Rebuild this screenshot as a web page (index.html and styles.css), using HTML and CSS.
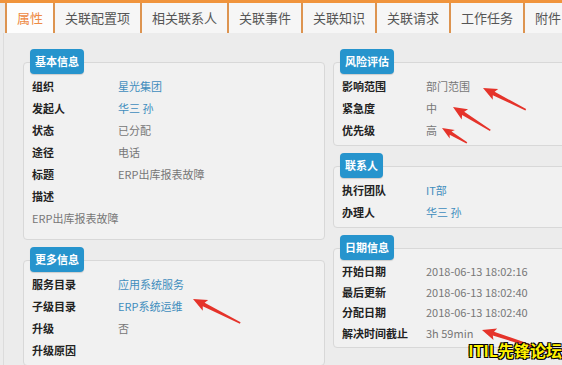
FILE: index.html
```html
<!DOCTYPE html>
<html lang="zh-CN">
<head>
    <meta charset="UTF-8">
    <meta name="viewport" content="width=device-width, initial-scale=1.0">
    <title>工单详情 - 属性</title>
    <link rel="stylesheet" href="styles.css">
</head>
<body>

    <div class="page">
        <div class="tabs">
            <div class="tab active">属性</div>
            <div class="tab">关联配置项</div>
            <div class="tab">相关联系人</div>
            <div class="tab">关联事件</div>
            <div class="tab">关联知识</div>
            <div class="tab">关联请求</div>
            <div class="tab">工作任务</div>
            <div class="tab">附件</div>
        </div>

        <div class="content">
            <div class="column left">
                <div class="panel">
                    <div class="panel-title">基本信息</div>
                    <div class="panel-body">
                        <div class="row"><span class="label">组织</span><a class="value link" href="#">星光集团</a></div>
                        <div class="row"><span class="label">发起人</span><a class="value link" href="#">华三 孙</a></div>
                        <div class="row"><span class="label">状态</span><span class="value">已分配</span></div>
                        <div class="row"><span class="label">途径</span><span class="value">电话</span></div>
                        <div class="row"><span class="label">标题</span><span class="value">ERP出库报表故障</span></div>
                        <div class="row"><span class="label">描述</span><span class="value"></span></div>
                        <div class="row desc">ERP出库报表故障</div>
                    </div>
                </div>

                <div class="panel">
                    <div class="panel-title">更多信息</div>
                    <div class="panel-body">
                        <div class="row"><span class="label">服务目录</span><a class="value link" href="#">应用系统服务</a></div>
                        <div class="row"><span class="label">子级目录</span><a class="value link" href="#">ERP系统运维</a></div>
                        <div class="row"><span class="label">升级</span><span class="value">否</span></div>
                        <div class="row"><span class="label">升级原因</span><span class="value"></span></div>
                    </div>
                </div>
            </div>

            <div class="column right">
                <div class="panel">
                    <div class="panel-title">风险评估</div>
                    <div class="panel-body">
                        <div class="row"><span class="label">影响范围</span><span class="value">部门范围</span></div>
                        <div class="row"><span class="label">紧急度</span><span class="value">中</span></div>
                        <div class="row"><span class="label">优先级</span><span class="value">高</span></div>
                    </div>
                </div>

                <div class="panel">
                    <div class="panel-title">联系人</div>
                    <div class="panel-body">
                        <div class="row"><span class="label">执行团队</span><a class="value link" href="#">IT部</a></div>
                        <div class="row"><span class="label">办理人</span><a class="value link" href="#">华三 孙</a></div>
                    </div>
                </div>

                <div class="panel">
                    <div class="panel-title">日期信息</div>
                    <div class="panel-body dates">
                        <div class="row"><span class="label">开始日期</span><span class="value">2018-06-13 18:02:16</span></div>
                        <div class="row"><span class="label">最后更新</span><span class="value">2018-06-13 18:02:40</span></div>
                        <div class="row"><span class="label">分配日期</span><span class="value">2018-06-13 18:02:40</span></div>
                        <div class="row"><span class="label">解决时间截止</span><span class="value">3h 59min</span></div>
                    </div>
                </div>
            </div>
        </div>
    </div>

    <!-- 标注箭头 -->
    <svg class="arrows" width="562" height="365" viewBox="0 0 562 365">
        <g fill="#e5332a">
            <polygon transform="translate(193,299) rotate(27)" points="0,0 14,-6 12,-2 53,-0.8 53,0.8 12,2 14,6"/>
            <polygon transform="translate(483,88) rotate(27)" points="0,0 14,-6 12,-2 48,-0.8 48,0.8 12,2 14,6"/>
            <polygon transform="translate(453,107) rotate(32)" points="0,0 14,-6 12,-2 44,-0.8 44,0.8 12,2 14,6"/>
            <polygon transform="translate(442,128) rotate(31)" points="0,0 12,-5 10,-1.8 29,-0.8 29,0.8 10,1.8 12,5"/>
            <polygon transform="translate(482,330) rotate(18)" points="0,0 14,-6 12,-2 70,-1 70,1 12,2 14,6"/>
        </g>
    </svg>

    <div class="watermark">ITIL先锋论坛</div>

</body>
</html>
```

FILE: styles.css
```css
html, body {
    margin: 0;
    padding: 0;
    width: 562px;
    height: 365px;
    overflow: hidden;
}
body {
    position: relative;
    font-family: "Noto Sans CJK SC", "Liberation Sans", sans-serif;
    background: #ececec;
    color: #333;
}
.page {
    width: 562px;
    height: 365px;
    overflow: hidden;
}
.tabs {
    display: flex;
    border-top: 3px solid #f0943c;
    padding-left: 5px;
    background: #ececec;
}
.tab {
    flex: none;
    height: 30px;
    line-height: 30px;
    padding: 0 10px;
    font-size: 13px;
    color: #555;
    background: #f6f6f6;
    border-right: 2px solid #dd9450;
    white-space: nowrap;
}
.tab:first-child {
    border-left: 2px solid #dd9450;
}
.tab.active {
    background: #fdfdfd;
    color: #ee8a44;
}
.content {
    display: flex;
    gap: 8px;
    margin-left: 3px;
    border-left: 1px solid #dcdcdc;
    padding: 16px 0 0 19px;
}
.column {
    width: 302px;
    flex: none;
}
.panel {
    display: flex;
    flex-direction: column;
    align-items: flex-start;
    margin-bottom: 7px;
}
.panel-title {
    position: relative;
    z-index: 1;
    margin-left: 7px;
    height: 25px;
    line-height: 25px;
    padding: 0 5px;
    background: #2694cd;
    color: #fff;
    font-size: 11px;
    font-weight: bold;
    border-radius: 4px;
    box-shadow: 0 1px 1px rgba(0, 0, 0, 0.15);
}
.panel-body {
    align-self: stretch;
    margin-top: -12px;
    padding: 12px 8px 4px;
    background: #f1f1f1;
    border: 1px solid #d8d8d8;
    border-radius: 4px;
}
.row {
    display: grid;
    grid-template-columns: 86px 1fr;
    height: 22px;
    line-height: 22px;
    font-size: 11px;
}
.right .row {
    grid-template-columns: 84px 1fr;
}
.dates .row {
    height: 20.5px;
    line-height: 20.5px;
}
.label {
    font-weight: bold;
    color: #222;
}
.value {
    color: #777;
}
.link {
    color: #3f8dbd;
    text-decoration: none;
}
.row.desc {
    display: block;
    color: #777;
    margin-bottom: 6px;
}
.arrows {
    position: absolute;
    left: 0;
    top: 0;
}
.watermark {
    position: absolute;
    right: 0;
    bottom: 3px;
    font-size: 16px;
    font-weight: bold;
    color: #fff200;
    text-shadow: -1px -1px 0 #000, 1px -1px 0 #000, -1px 1px 0 #000, 1px 1px 0 #000;
    white-space: nowrap;
}
```
